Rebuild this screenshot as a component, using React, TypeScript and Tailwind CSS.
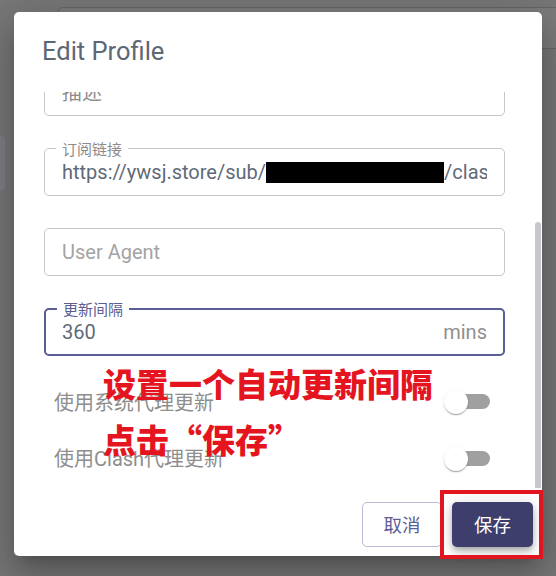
import React from "react";

const roboto = { fontFamily: 'Roboto, "Noto Sans CJK SC", sans-serif' };
const cjk = { fontFamily: '"Noto Sans CJK SC", Roboto, sans-serif' };

function Switch() {
  return (
    <div className="relative w-[46px] h-[24px] shrink-0">
      <div className="absolute left-[6px] top-[4px] w-[40px] h-[15px] rounded-full bg-[#a0a0a0]" />
      <div className="absolute left-0 top-0 w-[24px] h-[24px] rounded-full bg-white shadow-[0_2px_1px_-1px_rgba(0,0,0,0.2),0_1px_1px_0_rgba(0,0,0,0.14),0_1px_3px_0_rgba(0,0,0,0.12)]" />
    </div>
  );
}

function Field({
  label,
  focused,
  children,
}: {
  label?: string;
  focused?: boolean;
  children: React.ReactNode;
}) {
  return (
    <div
      className={
        "relative h-[48px] shrink-0 rounded-[5px] flex items-center " +
        (focused ? "border-2 border-[#5b5e95] pl-[16px] pr-[16px]" : "border border-[#c6c6c6] pl-[17px] pr-[17px]")
      }
    >
      {label && (
        <span
          className={
            "absolute left-[11px] px-[6px] bg-white text-[15px] leading-[18px] " +
            (focused ? "top-[-10px] text-[#5b5e95]" : "top-[-9px] text-[#8c8c8c]")
          }
          style={cjk}
        >
          {label}
        </span>
      )}
      {children}
    </div>
  );
}

export default function App() {
  return (
    <div className="relative w-[556px] h-[576px] overflow-hidden bg-[#777777]" style={roboto}>
      {/* page behind the backdrop */}
      <div className="absolute left-[58px] top-[7px] w-[520px] h-[42px] rounded-[5px] border border-[#666666] bg-[#7b7b7b]" />
      <div className="absolute left-[-10px] top-[135px] w-[15px] h-[56px] rounded-[5px] bg-[#7e7e84]" />

      {/* dialog */}
      <div className="absolute left-[14px] top-[12px] w-[528px] h-[544px] bg-white rounded-[5px] flex flex-col shadow-[0_11px_15px_-7px_rgba(0,0,0,0.2),0_24px_38px_3px_rgba(0,0,0,0.14),0_9px_46px_8px_rgba(0,0,0,0.12)]">
        <div className="h-[80px] shrink-0 pl-[28px] pt-[23px]">
          <h2 className="text-[25.5px] leading-[32px] text-[#5c6775] font-normal">Edit Profile</h2>
        </div>

        <div className="relative h-[396px] shrink-0 overflow-hidden">
          <div className="flex flex-col gap-[32px] pl-[30px] pr-[37px] mt-[-24px]">
            <Field>
              <span className="text-[20px] text-[#8c8c8c]" style={cjk}>描述</span>
            </Field>
            <Field label="订阅链接">
              <div className="overflow-hidden whitespace-nowrap text-[20px] text-[#5f6a78] w-full leading-[24px]">
                https://ywsj.store/sub/
                <span className="inline-block w-[178px] h-[21px] bg-black align-[-4px]" />
                /clash?flag=clash
              </div>
            </Field>
            <Field>
              <span className="text-[20px] text-[#a3a3a3]">User Agent</span>
            </Field>
            <Field label="更新间隔" focused>
              <div className="flex w-full items-center justify-between">
                <span className="text-[20px] text-[#5f6a78]">360</span>
                <span className="text-[20px] text-[#8f8f8f]">mins</span>
              </div>
            </Field>
          </div>
          <div className="flex flex-col pl-[40px] pr-[52px] mt-[17px]">
            <div className="h-[57px] flex items-center justify-between">
              <span className="text-[20px] text-[#8e8e8e]" style={cjk}>使用系统代理更新</span>
              <Switch />
            </div>
            <div className="h-[57px] flex items-center justify-between">
              <span className="text-[20px] text-[#8e8e8e]" style={cjk}>
                使用<span style={roboto}>Clash</span>代理更新
              </span>
              <Switch />
            </div>
          </div>
          <div className="absolute right-[1px] top-[130px] w-[6px] h-[266px] bg-[#c6c7cc] rounded-t-[3px]" />
        </div>

        <div className="flex-1 flex justify-end items-start pt-[14px] pr-[9px] gap-[10px]">
          <button className="w-[80px] h-[45px] rounded-[5px] border border-[#b9bad3] text-[18.5px] text-[#5b5e95] bg-white" style={cjk}>
            取消
          </button>
          <button className="w-[81px] h-[45px] rounded-[5px] bg-[#3e3e6c] text-[18.5px] text-white shadow-[0_3px_5px_-1px_rgba(0,0,0,0.2),0_6px_10px_0_rgba(0,0,0,0.14),0_1px_18px_0_rgba(0,0,0,0.12)]" style={cjk}>
            保存
          </button>
        </div>
      </div>

      {/* annotations */}
      <div className="absolute left-[103px] top-[367px] text-[33px] leading-[33px] font-black text-[#e5151f] whitespace-nowrap" style={cjk}>
        设置一个自动更新间隔
      </div>
      <div className="absolute left-[103px] top-[423px] text-[33px] leading-[33px] font-black text-[#e5151f] whitespace-nowrap" style={cjk}>
        点击“保存”
      </div>
      <div className="absolute left-[440px] top-[490px] w-[103px] h-[69px] border-[4px] border-[#e2141f]" />
    </div>
  );
}
